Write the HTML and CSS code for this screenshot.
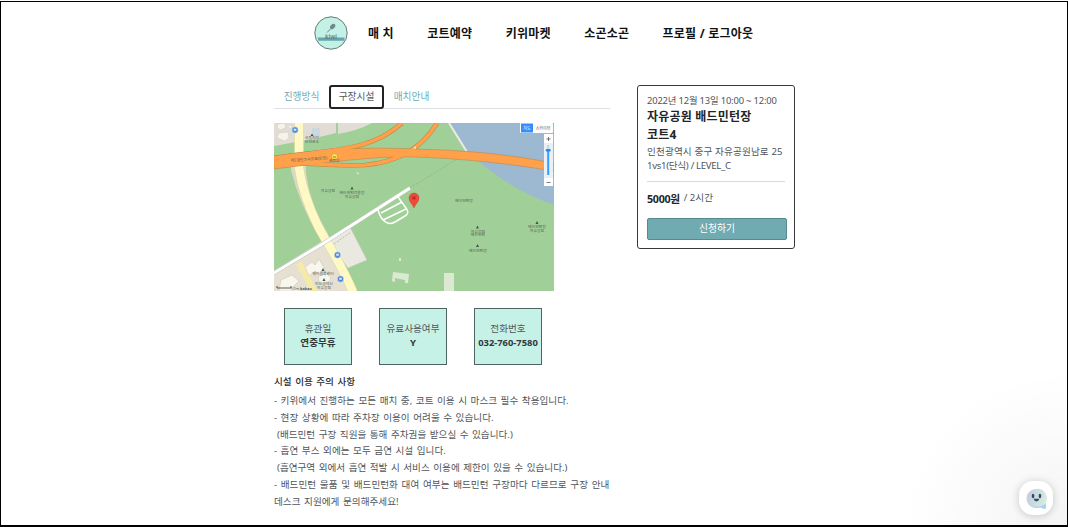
FILE: index.html
```html
<!DOCTYPE html>
<html lang="ko">
<head>
<meta charset="utf-8">
<title>kiwi</title>
<link rel="stylesheet" href="styles.css">
</head>
<body>
<div class="page">
  <header class="header">
    <svg class="logo" viewBox="0 0 34 34">
      <circle cx="17" cy="17" r="16.2" fill="#c4f1e6" stroke="#647b79" stroke-width="1"/>
      <path d="M3.5 21.5H30.5V24.7H4.5Z" fill="#68a4aa"/>
      <g fill="#70858a" stroke="#70858a"><ellipse cx="18.7" cy="10.5" rx="1.6" ry="2.6" transform="rotate(43 18.7 10.5)"/><path d="M17 12.5L13 16.5" stroke-width="1"/></g>
      <text x="17" y="23.3" text-anchor="middle" class="logo-text">kiwi</text>
    </svg>
    <nav class="nav"><a>매 치</a><a>코트예약</a><a>키위마켓</a><a>소곤소곤</a><a>프로필 / 로그아웃</a></nav>
  </header>
  <main class="content">
    <section class="detail">
      <div class="tabs"><span>진행방식</span><span class="active">구장시설</span><span>매치안내</span></div>
      <svg class="map" viewBox="0 0 280 168">
        <rect width="280" height="168" fill="#a0d097"/>
        <path d="M176 0L193 28L203 37Q236 66 280 82V0Z" fill="#9db9d1"/>
        <path d="M175 0L193 29" stroke="#eee9e5" stroke-width="2"/>
        <path d="M0 0H22V19L0 23ZM29 0H62V10L29 18ZM64 0H98Q83 8 64 11Z" fill="#e1ddd4"/>
        <path d="M38 5H46V15L38 17Z" fill="#cbd8df"/>
        <g fill="#f6f3e8" stroke="#c8c4bb" stroke-width=".4"><path d="M4 1L10 0L12 4L7 7L3 5ZM5 10L14 9L15 15L11 18L3 15ZM13 3L18 2L17 6Z"/></g>
        <path d="M0 148L50 117L60 129L78 168H0Z" fill="#e6e0d3"/>
        <path d="M17 31V47Q25 80 45 114L54 111Q36 82 32 50V30Z" fill="#dcd7cb"/>
        <path d="M54 119L76 104L93 137L74 145Z" fill="#e9e9e2" stroke="#c9c3b6" stroke-width=".5"/>
        <path d="M25 140L41 170" fill="none" stroke="#f5eaa7" stroke-width="6"/>
        <path d="M25 0V45Q29 72 43 101C50 116 64 134 79 169" fill="none" stroke="#e3d7a2" stroke-width="9.4"/>
        <path d="M25 0V45Q29 72 43 101C50 116 64 134 79 169" fill="none" stroke="#fff9c5" stroke-width="8.4"/>
        <path d="M-2 151L50 120L136 65" fill="none" stroke="#c4cbbd" stroke-width="4"/>
        <g fill="none" stroke="#fff"><path d="M-2 151L50 120L136 65" stroke-width="2.8"/><path d="M104 87C107 98 114 103 121 99L131 93Q136 90 132 85L124 74M107 90L128 79M109 97L132 86" stroke-width="1.5"/></g>
        <path d="M136 65L193 30M60 121L77 109" fill="none" stroke="#8aa476" stroke-width=".6" stroke-dasharray="2 1.5"/>
        <g fill="none" stroke="#bd8149"><path d="M0 35C58 26 96 29 128 0M0 40C40 40 58 43 91 42C125 39 148 25 163 0" stroke-width="4.5"/></g>
        <path d="M0 33C70 23 113 25 141 26Q214 27 280 40V48Q208 36 141 34C100 33 57 39 0 46Z" fill="#ffa14b" stroke="#b78147" stroke-width=".5"/>
        <g fill="none" stroke="#ffa14b" stroke-width="3.5"><path d="M0 35C58 26 96 29 128 0M0 40C40 40 58 43 91 42C125 39 148 25 163 0"/></g>
        <g fill="#f9f6ed" stroke="#c8c3b7" stroke-width=".5"><path d="M31 144L38 139L41 142L45 136L50 145L46 151L41 148L35 153ZM44 154L52 150L57 155L54 160L46 162ZM7 157L18 152L25 158L19 164L29 168H5Z"/></g>
        <g fill="#dbe9d2"><path d="M119 149L135 151L134 160H131V157L121 155V159L118 158ZM170 150H180V168H170ZM139 25L142 23V26ZM82 49L84 52L85 50ZM125 135H127V138H125Z"/></g>
        <g fill="#5289d5" stroke="#e4eef7" stroke-width=".5"><circle cx="21" cy="7" r="3.2"/><circle cx="63.5" cy="132" r="3.2"/><circle cx="66.5" cy="156" r="3.2"/></g>
        <g fill="#dce8fa"><path d="M19.7 5.7H22.3V7.8H19.7ZM62.2 130.7H64.8V132.8H62.2ZM65.2 154.7H67.8V156.8H65.2Z"/></g>
        <circle cx="60.5" cy="33.5" r="3" fill="#ffe052" stroke="#a17b31" stroke-width=".4"/><path d="M59 34H62" stroke="#987b37"/>
        <g class="map-label"><text x="35" y="37.5" transform="rotate(-4 35 37)">제2경인고속도로(인천)</text><text x="38" y="15.5">국토지리</text><text x="38" y="19.5">인천분소</text><text x="60.5" y="39">관문IC</text><text x="54" y="68.5">자유공원</text><text x="78" y="70.5">배드민턴전용장</text><text x="78" y="74.5">자유공원</text><text x="190" y="78.5">배드민턴장</text><text x="204" y="109.5">자유공원</text><text x="204" y="113">배드민턴</text><text x="204" y="128.5">배드민턴장</text><text x="263" y="105">배드민턴장</text><text x="263" y="109">자유공원</text><text x="49" y="152">제이물류센터</text><text x="50" y="162">인천광역시</text><text x="50" y="166">자유공원</text><text x="21" y="166.5">50m</text><text x="32" y="166.5" font-weight="bold">kakao</text></g>
        <g fill="#425349"><path d="M38 10.5L39.5 13H36.5ZM78 63.5L79.5 66.5H76.5ZM203.5 102.5L205 105.5H202ZM203.5 121L205 124H202ZM263 98L264.5 101H261.5ZM49 145L50.5 148H47.5ZM50 155L51.5 158H48.5Z"/></g>
        <path d="M3 163V165H17V163" fill="none" stroke="#333" stroke-width=".8"/>
        <path d="M140 85C138 80 135 79 135 75A5 5 0 0 1 145 75C145 79 142 80 140 85Z" fill="#ee4939" stroke="#c83b2d" stroke-width=".4"/><circle cx="140" cy="75" r="1.8" fill="#b2342c"/>
        <rect x="246" y="0" width="33" height="10" rx="1" fill="#fff"/><rect x="247" y=".5" width="12" height="9" fill="#318fff"/>
        <text x="253" y="6.8" class="map-control white">지도</text><text x="269" y="6.8" class="map-control">스카이뷰</text>
        <rect x="270" y="11" width="9" height="52" rx="1" fill="#eaf1f5"/><path d="M270 11H279V20H270ZM270 55H279V63H270Z" fill="#fff"/><path d="M272.5 16H276.5M274.5 14V18M272.5 59.5H276.5" stroke="#555" stroke-width=".8"/><path d="M274.2 22V27" stroke="#ccd3da" stroke-width="2"/><path d="M274.2 27V52" stroke="#389bff" stroke-width="2"/><rect x="271.7" y="26" width="5" height="2.5" rx="1" fill="#218bf5"/>
      </svg>
      <div class="facts">
        <div class="fact"><span>휴관일</span><b>연중무휴</b></div><div class="fact"><span>유료사용여부</span><b>Y</b></div><div class="fact"><span>전화번호</span><b class="phone">032-760-7580</b></div>
      </div>
      <h2 class="notice-title">시설 이용 주의 사항</h2>
      <div class="notice">
        <p>- 키위에서 진행하는 모든 매치 중, 코트 이용 시 마스크 필수 착용입니다.</p>
        <p>- 현장 상황에 따라 주차장 이용이 어려울 수 있습니다.</p>
        <p class="indent">(배드민턴 구장 직원을 통해 주차권을 받으실 수 있습니다.)</p>
        <p>- 흡연 부스 외에는 모두 금연 시설 입니다.</p>
        <p class="indent">(흡연구역 외에서 흡연 적발 시 서비스 이용에 제한이 있을 수 있습니다.)</p>
        <p class="long">- 배드민턴 물품 및 배드민턴화 대여 여부는 배드민턴 구장마다 다르므로 구장 안내</p>
        <p>데스크 지원에게 문의해주세요!</p>
      </div>
    </section>
    <aside class="booking">
      <p class="date">2022년 12월 13일 10:00 ~ 12:00</p>
      <h1>자유공원 배드민턴장<br>코트4</h1>
      <p class="address">인천광역시 중구 자유공원남로 25</p><p class="level">1vs1(단식) / LEVEL_C</p>
      <hr>
      <p class="price"><b>5000원</b><span>/ 2시간</span></p>
      <button>신청하기</button>
    </aside>
  </main>
  <div class="glow"></div>
  <div class="chat"><svg viewBox="0 0 24 24"><defs><linearGradient id="face" x2="1" y2=".25"><stop stop-color="#c7c9df"/><stop offset=".6" stop-color="#c9dfe2"/><stop offset="1" stop-color="#d8eadd"/></linearGradient></defs><path d="M12 2A10 10 0 1 0 16 21Q19 23 22 22.5L21.5 17A10 10 0 0 0 12 2Z" fill="url(#face)"/><path d="M4 18Q9 23 16 21Q19 23 22 22.5L21.5 17Q19 20 16 20Q9 22 4 18Z" fill="#acd0ef"/><g fill="#3d4965"><ellipse cx="8.4" cy="9.4" rx="1.4" ry="2.3"/><ellipse cx="15.6" cy="9.4" rx="1.4" ry="2.3"/><path d="M9 12.3H15Q14.3 15 12 15Q9.7 15 9 12.3Z"/></g></svg></div>
</div>
</body>
</html>
```
FILE: styles.css
```css
* { box-sizing: border-box; }
html, body { margin: 0; background: #fff; }
body { width: 1068px; height: 527px; padding-top: 1px; overflow: hidden; font-family: "Noto Sans", "Noto Sans CJK KR", sans-serif; color: #50555a; }
p, h1, h2 { margin: 0; }
.page { position: relative; width: 1068px; height: 526px; border: 1px solid #000; border-bottom-width: 2px; overflow: hidden; }
.header { height: 64px; padding: 0 0 2px 313px; display: flex; align-items: center; }
.logo { width: 34px; height: 34px; }
.logo-text { font: 6.5px "Noto Sans", sans-serif; fill: #526b70; }
.nav { display: flex; gap: 33.4px; margin-left: 20px; padding-top: 2px; font-size: 12px; line-height: 18px; font-weight: 700; color: #111; letter-spacing: .22px; white-space: nowrap; }
.content { display: flex; align-items: flex-start; padding: 19px 0 0 273px; gap: 27px; }
.detail { width: 336px; }
.tabs { height: 24px; display: flex; font-size: 9.7px; line-height: 14px; color: #6eabb2; border-bottom: 1px solid #dee2e6; }
.tabs span { width: 55px; height: 24px; display: flex; align-items: center; justify-content: center; white-space: nowrap; }
.tabs .active { color: #53595e; border: 2px solid #222; border-radius: 3px; background: #fff; }
.map { display: block; width: 280px; height: 168px; margin-top: 14px; }
.map-label { font: 3.9px "Noto Sans", "Noto Sans CJK KR", sans-serif; fill: #555d58; text-anchor: middle; }
.map-control { font: 4px "Noto Sans", "Noto Sans CJK KR", sans-serif; fill: #555; text-anchor: middle; }
.map-control.white { fill: #fff; }
.facts { display: flex; gap: 27px; padding: 17px 0 0 10px; }
.fact { width: 68px; height: 57px; padding-bottom: 1px; border: 1px solid #4d6460; background: #c6f1e6; display: flex; flex-direction: column; align-items: center; justify-content: center; font-size: 9.6px; line-height: 14px; white-space: nowrap; }
.fact b { color: #30383b; }
.phone { font-size: 9.4px; }
.notice-title { margin-top: 10px; font-size: 9.6px; line-height: 14px; font-weight: 500; color: #292d30; word-spacing: 1px; }
.notice { margin-top: 4px; font-size: 9.6px; line-height: 16.83px; white-space: nowrap; word-spacing: 1px; }
.long { word-spacing: 1.15px; }
.notice p:not(.indent) { letter-spacing: .02px; }
.indent { padding-left: 3px; }
.booking { width: 158px; height: 164px; padding: 8px 7px 7px 9px; border: 1px solid #37393b; border-radius: 3px; font-size: 9.6px; line-height: 14px; white-space: nowrap; }
.date { font-size: 9.4px; letter-spacing: -.17px; }
.booking h1 { font-size: 12px; line-height: 18px; letter-spacing: .2px; color: #212529; }
.address { margin-top: 1px; letter-spacing: .14px; }
.level { letter-spacing: -.3px; }
.booking hr { width: 138px; height: 1px; margin: 8px 0; border: 0; background: #d7d9da; }
.price { display: flex; align-items: center; height: 17px; gap: 4px; }
.price b { font-size: 10.7px; letter-spacing: -.3px; color: #212529; }
.price span { padding-bottom: 2px; }
.booking button { display: block; width: 140px; height: 22px; margin-top: 11px; padding: 0; border: 1px solid #558b90; border-radius: 2px; background: #70abb2; color: #fff; font: 9.8px/18px "Noto Sans", "Noto Sans CJK KR", sans-serif; }
.glow { position: absolute; right: 0; bottom: 0; width: 165px; height: 155px; background: radial-gradient(ellipse 165px 155px at 100% 100%, rgba(0,0,0,.045), rgba(0,0,0,0)); }
.chat { position: absolute; left: 1018px; top: 479px; width: 34px; height: 34px; border-radius: 14px; background: #fff; box-shadow: 0 1px 8px #0003; display: grid; place-items: center; }
.chat svg { width: 23px; height: 23px; }
```
